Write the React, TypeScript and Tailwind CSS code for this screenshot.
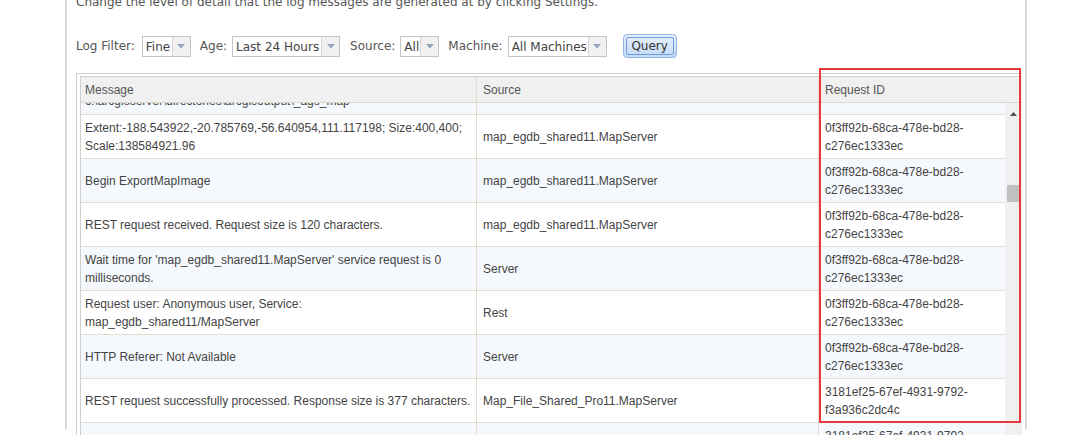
import React from 'react';

interface LogRow {
  message: string;
  source: string;
  requestId: string;
}

const rows: LogRow[] = [
  {
    message: 'Extent:-188.543922,-20.785769,-56.640954,111.117198; Size:400,400; Scale:138584921.96',
    source: 'map_egdb_shared11.MapServer',
    requestId: '0f3ff92b-68ca-478e-bd28-c276ec1333ec',
  },
  {
    message: 'Begin ExportMapImage',
    source: 'map_egdb_shared11.MapServer',
    requestId: '0f3ff92b-68ca-478e-bd28-c276ec1333ec',
  },
  {
    message: 'REST request received. Request size is 120 characters.',
    source: 'map_egdb_shared11.MapServer',
    requestId: '0f3ff92b-68ca-478e-bd28-c276ec1333ec',
  },
  {
    message: "Wait time for 'map_egdb_shared11.MapServer' service request is 0 milliseconds.",
    source: 'Server',
    requestId: '0f3ff92b-68ca-478e-bd28-c276ec1333ec',
  },
  {
    message: 'Request user: Anonymous user, Service: map_egdb_shared11/MapServer',
    source: 'Rest',
    requestId: '0f3ff92b-68ca-478e-bd28-c276ec1333ec',
  },
  {
    message: 'HTTP Referer: Not Available',
    source: 'Server',
    requestId: '0f3ff92b-68ca-478e-bd28-c276ec1333ec',
  },
  {
    message: 'REST request successfully processed. Response size is 377 characters.',
    source: 'Map_File_Shared_Pro11.MapServer',
    requestId: '3181ef25-67ef-4931-9792-f3a936c2dc4c',
  },
  {
    message: '',
    source: '',
    requestId: '3181ef25-67ef-4931-9792-f3a936c2dc4c',
  },
];

// 選択ボックス（見た目だけ）
const FakeSelect = ({ value, width }: { value: string; width: string }) => (
  <div className={`flex h-[21px] ${width} border border-[#c4c4c4] bg-white`}>
    <div className="flex-1 pl-[3px] text-[12px] leading-[20px] text-[#444] whitespace-nowrap overflow-hidden">
      {value}
    </div>
    <div className="flex w-[18px] items-center justify-center border-l border-[#d4d4d4] bg-[#f1f1f1]">
      <svg width="8" height="5" viewBox="0 0 8 5">
        <polygon points="0,0 8,0 4,4.5" fill="#93a3bd" />
      </svg>
    </div>
  </div>
);

const App = () => {
  return (
    <div className="relative h-[435px] w-full overflow-hidden bg-white">
      <div
        className="ml-[65px] h-[435px] w-[962px] border-x-2 border-[#d8d8d8] pl-[9px]"
        style={{ fontFamily: '"DejaVu Sans", Verdana, sans-serif' }}
      >
        <p className="-mt-[6px] text-[12px] leading-[16px] text-[#555] whitespace-nowrap">
          Change the level of detail that the log messages are generated at by clicking Settings.
        </p>

        {/* フィルター行 */}
        <div className="mt-[24px] flex h-[24px] items-center text-[12px] text-[#555]">
          <span>Log Filter:</span>
          <div className="ml-[7px]">
            <FakeSelect value="Fine" width="w-[49px]" />
          </div>
          <span className="ml-[9px]">Age:</span>
          <div className="ml-[5px]">
            <FakeSelect value="Last 24 Hours" width="w-[108px]" />
          </div>
          <span className="ml-[10px]">Source:</span>
          <div className="ml-[5px]">
            <FakeSelect value="All" width="w-[39px]" />
          </div>
          <span className="ml-[9px]">Machine:</span>
          <div className="ml-[5px]">
            <FakeSelect value="All Machines" width="w-[99px]" />
          </div>
          <button className="ml-[16px] h-[24px] w-[54px] rounded-[4px] border border-[#93b4e2] bg-gradient-to-b from-[#e6f0fc] to-[#c4daf6] p-[2px]">
            <div className="h-full w-full rounded-[2px] border border-[#6f9de0] text-[12px] leading-[16px] text-[#333]">
              Query
            </div>
          </button>
        </div>

        {/* ログテーブル */}
        <div
          className="mt-[15px] w-[946px] border border-r-0 border-b-0 border-[#cfcfcf] pl-[3px] pt-[2px]"
          style={{ fontFamily: '"Liberation Sans", Arial, sans-serif' }}
        >
          <div className="border-l border-t border-[#cfcfcf] text-[12px] text-[#444]">
            <div className="flex h-[26px] border-b border-[#ded6c8] bg-[#f0f0f0] text-[#555]">
              <div className="w-[396px] border-r border-[#e4dccd] pl-[4px] leading-[26px]">Message</div>
              <div className="w-[342px] border-r border-[#e4dccd] pl-[6px] leading-[26px]">Source</div>
              <div className="flex-1 pl-[6px] leading-[26px]">Request ID</div>
            </div>

            <div className="flex">
              <div className="flex-1 overflow-hidden">
                <div className="flex h-[12px] border-b border-[#e6ddcc] bg-[#f5f9fd] overflow-hidden">
                  <div className="w-[396px] border-r border-[#e4dccd] pl-[4px]">
                    <div className="-mt-[11px] leading-[18px] whitespace-nowrap">
                      c:\arcgisserver\directories\arcgisoutput\_ags_map
                    </div>
                  </div>
                  <div className="w-[342px] border-r border-[#e4dccd]" />
                  <div className="flex-1" />
                </div>
                {rows.map((row, index) => (
                  <div
                    key={index}
                    className={`flex h-[44px] border-b border-[#e6ddcc] ${index % 2 === 0 ? 'bg-white' : 'bg-[#f5f9fd]'}`}
                  >
                    <div className="flex w-[396px] items-center border-r border-[#e4dccd] pl-[4px] pr-[3px] leading-[18px]">
                      {row.message}
                    </div>
                    <div className="flex w-[342px] items-center border-r border-[#e4dccd] pl-[6px] leading-[18px]">
                      {row.source}
                    </div>
                    <div className="flex flex-1 items-center pl-[6px] pr-[4px] leading-[18px]">
                      {row.requestId}
                    </div>
                  </div>
                ))}
              </div>

              {/* スクロールバー */}
              <div className="relative w-[17px] shrink-0 bg-[#f0f0f0]">
                <svg className="absolute left-[5px] top-[9px]" width="7" height="4" viewBox="0 0 7 4">
                  <polygon points="3.5,0 7,4 0,4" fill="#505050" />
                </svg>
                <div className="absolute left-[2px] top-[82px] h-[17px] w-[13px] bg-[#c1c1c1]" />
              </div>
            </div>
          </div>
        </div>
      </div>

      {/* 赤い注釈枠 */}
      <div className="absolute left-[819px] top-[68px] h-[355px] w-[202px] border-2 border-[#e8383d]" />
    </div>
  );
};

export default App;
